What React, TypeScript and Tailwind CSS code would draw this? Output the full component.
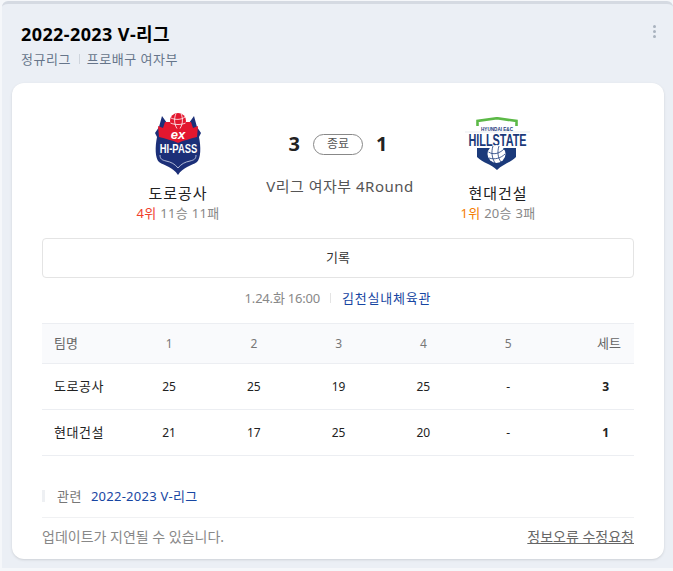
const font = "font-['Noto_Sans','Noto_Sans_CJK_KR',sans-serif]";

function HipassLogo() {
  return (
    <svg viewBox="0 0 48 62" className="h-[62px] w-12">
      <path d="M1 20 L5 14 L8 3 L13 10 L35 10 L40 3 L43 14 L47 20 L45 24 C47 34 47 45 43 49 C37 53 29 54 24 62 C19 54 11 53 5 49 C1 45 1 34 3 24 Z" fill="#1c2f78" />
      <path d="M4 13 L9 15 L11 9 L37 9 L39 15 L44 13 L43 24 C36 26 30 27 24 30 C18 27 12 26 5 24 Z" fill="#e3172f" />
      <circle cx="24" cy="8" r="8" fill="#e3172f" />
      <path d="M17 5 C21 7 27 7 31 4 M16.5 10 C21 12 27 12 31.5 10 M22 0.5 C20 5 20 11 23 15.5 M27 0.5 C29 5 29 11 26 15.5" fill="none" stroke="#fff" strokeWidth="0.8" />
      <text x="24" y="26" textAnchor="middle" fontFamily="Liberation Sans" fontStyle="italic" fontWeight="700" fontSize="13" fill="#fff">ex</text>
      <text transform="translate(24.5 39.5) scale(1 1.3)" textAnchor="middle" fontFamily="Liberation Sans" fontWeight="700" fontSize="9.4" fill="#fff">HI-PASS</text>
      <path d="M6 42 C6 46 8 47 12 48 C17 49 21 51 24 55 C27 51 31 49 36 48 C40 47 42 46 42 42" fill="none" stroke="#d4daee" strokeWidth="0.8" />
    </svg>
  );
}

function HillstateLogo() {
  return (
    <svg viewBox="0 0 66 54" className="h-[54px] w-[66px]">
      <path d="M12.5 9 L12.5 4 L32 1.2 L51.5 4 L51.5 9" fill="none" stroke="#5cb947" strokeWidth="2.6" />
      <text x="32" y="13.5" textAnchor="middle" fontFamily="Liberation Sans" fontWeight="700" fontSize="4.6" fill="#1b3a7a">HYUNDAI E&amp;C</text>
      <path d="M0 15 H65" stroke="#d9dde6" strokeWidth="0.6" />
      <text transform="translate(32.5 29) scale(1 1.5)" textAnchor="middle" fontFamily="Liberation Sans" fontWeight="700" fontSize="10.9" fill="#1b3a7a">HILLSTATE</text>
      <path d="M12 31 L51 31 L51 40 C45 46 38 47 32 53 C26 47 18 46 12 40 Z" fill="#1b3a7a" />
      <circle cx="31.5" cy="37" r="9" fill="#fff" />
      <path d="M23.5 35 C28 38 34 37 39 32 M24 41 C30 43 36 41 40 37 M28 29 C26 35 27 41 30 46 M34 29 C32 35 33 41 36 45" fill="none" stroke="#1b3a7a" strokeWidth="0.8" />
    </svg>
  );
}

function Team({ logo, name, rank, rankColor, record }: { logo: React.ReactNode; name: string; rank: string; rankColor: string; record: string }) {
  return (
    <div className="flex w-[120px] flex-col items-center">
      <div className="flex h-16 items-center justify-center">{logo}</div>
      <div className="mt-[7px] text-[15px] leading-5 tracking-[1px] text-[#222]">{name}</div>
      <div className="mt-0.5 text-[13px] leading-4 tracking-[0.3px] text-[#888]">
        <span className={rankColor}>{rank}</span> {record}
      </div>
    </div>
  );
}

const rows = [
  { team: '도로공사', sets: ['25', '25', '19', '25', '-'], total: '3' },
  { team: '현대건설', sets: ['21', '17', '25', '20', '-'], total: '1' },
];

export default function App() {
  return (
    <div className={`${font} h-[571px] w-[673px] overflow-hidden bg-[#f5f7fa] pl-0.5 pt-px`}>
      <div className="h-[567px] rounded-t-md border-t-[3px] border-[#d5dae2] bg-[#ebeff5] px-2.5">
        <div className="flex items-start justify-between pl-[9px] pr-[7px] pt-[17px]">
          <div>
            <h1 className="text-lg font-bold leading-[26px] tracking-[0.4px] text-black">2022-2023 V-리그</h1>
            <div className="mt-[3px] flex items-center text-[13px] leading-[18px] tracking-[0.5px] text-[#66758a]">
              <span>정규리그</span>
              <span className="ml-2 mr-[7px] h-2.5 w-px bg-[#cfd5dd]" />
              <span>프로배구 여자부</span>
            </div>
          </div>
          <div className="mt-[4px] flex flex-col gap-[2px]">
            <span className="h-[3px] w-[3px] rounded-full bg-[#a9b2bf]" />
            <span className="h-[3px] w-[3px] rounded-full bg-[#a9b2bf]" />
            <span className="h-[3px] w-[3px] rounded-full bg-[#a9b2bf]" />
          </div>
        </div>

        <div className="mt-[15px] h-[476px] w-[652px] rounded-xl bg-white px-[30px] shadow-sm">
          <div className="flex justify-center pt-[29px]">
            <Team logo={<HipassLogo />} name="도로공사" rank="4위" rankColor="text-[#f0402c]" record="11승 11패" />
            <div className="mx-5 flex w-[160px] flex-col items-center pt-5">
              <div className="flex items-center">
                <span className="text-xl font-bold leading-6 text-[#222]">3</span>
                <span className="mx-[13px] flex h-[21px] w-[50px] items-center justify-center rounded-full border border-[#888] text-xs text-[#555]">종료</span>
                <span className="text-xl font-bold leading-6 text-[#222]">1</span>
              </div>
              <div className="mt-5 whitespace-nowrap pl-1 text-[15px] leading-5 tracking-[0.5px] text-[#555]">V리그 여자부 4Round</div>
            </div>
            <Team logo={<HillstateLogo />} name="현대건설" rank="1위" rankColor="text-[#f57c00]" record="20승 3패" />
          </div>

          <div className="mt-[17px] flex h-10 items-center justify-center rounded border border-[#e4e4e4] text-[13px] text-[#333]">기록</div>

          <div className="mt-2.5 flex items-center justify-center text-[13px] leading-5">
            <span className="tracking-[-0.2px] text-[#888]">1.24.화 16:00</span>
            <span className="ml-2.5 mr-[11px] h-2.5 w-px bg-[#e4e4e4]" />
            <span className="tracking-[0.8px] text-[#1746a2]">김천실내체육관</span>
          </div>

          <table className="mt-[15px] w-full table-fixed border-collapse text-xs">
            <thead>
              <tr className="h-10 border-y border-[#eceef2] bg-[#f9fafc]">
                <th className="w-[84.75px] pl-3 text-left text-[13px] font-normal text-[#666]">팀명</th>
                {['1', '2', '3', '4', '5'].map((n) => (
                  <th key={n} className="w-[84.75px] font-normal text-[#777]">{n}</th>
                ))}
                <th className="pr-[13px] text-right text-[13px] font-normal text-[#666]">세트</th>
              </tr>
            </thead>
            <tbody>
              {rows.map((r) => (
                <tr key={r.team} className="h-[46px] border-b border-[#eceef2] text-[#222]">
                  <td className="pl-3 text-left text-[13px] tracking-[0.5px]">{r.team}</td>
                  {r.sets.map((s, i) => (
                    <td key={i} className="text-center">{s}</td>
                  ))}
                  <td className="pr-[25px] text-right font-bold">{r.total}</td>
                </tr>
              ))}
            </tbody>
          </table>

          <div className="mt-[30px] flex items-center text-[13px] leading-5">
            <span className="mr-3 h-3 w-[3px] bg-[#eef0f3]" />
            <span className="tracking-[0.5px] text-[#777]">관련</span>
            <span className="ml-[9px] tracking-[0.25px] text-[#1746a2]">2022-2023 V-리그</span>
          </div>
          <div className="mt-[11px] flex h-[39px] items-center justify-between border-t border-[#f0f1f3] text-sm text-[#888]">
            <span>업데이트가 지연될 수 있습니다.</span>
            <span className="text-[#666] underline">정보오류 수정요청</span>
          </div>
        </div>
      </div>
    </div>
  );
}
